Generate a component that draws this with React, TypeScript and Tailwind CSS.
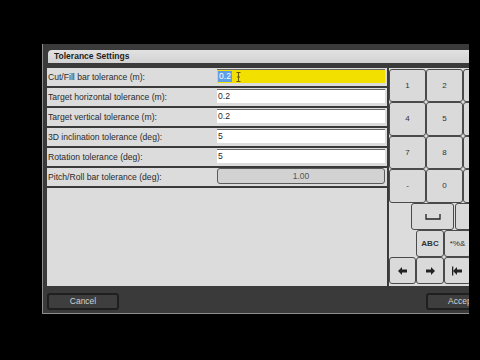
import type { ReactNode } from 'react'

const ROWS: { label: string; value: string; kind: 'active' | 'text' | 'button' }[] = [
  { label: 'Cut/Fill bar tolerance (m):', value: '0.2', kind: 'active' },
  { label: 'Target horizontal tolerance (m):', value: '0.2', kind: 'text' },
  { label: 'Target vertical tolerance (m):', value: '0.2', kind: 'text' },
  { label: '3D inclination tolerance (deg):', value: '5', kind: 'text' },
  { label: 'Rotation tolerance (deg):', value: '5', kind: 'text' },
  { label: 'Pitch/Roll bar tolerance (deg):', value: '1.00', kind: 'button' },
]

// third column is clipped by the window edge, so no labels there
const DIGITS = [
  ['1', '2', ''],
  ['4', '5', ''],
  ['7', '8', ''],
  ['-', '0', ''],
]
const ROW_H = ['h-[33px]', 'h-[34px]', 'h-[33px]', 'h-[34px]']

function Key({ className = '', children }: { className?: string; children?: ReactNode }) {
  return (
    <div
      className={`flex shrink-0 items-center justify-center rounded-[3px] border-[1.5px] border-[#4a4a4a] bg-[#dadada] text-[8px] text-[#333] ${className}`}
    >
      {children}
    </div>
  )
}

function IBeam() {
  return (
    <svg width="5" height="10" viewBox="0 0 5 10" className="ml-[4px]">
      <path d="M0.5 0.5h4M2.5 0.5v9M0.5 9.5h4M1 5h3" stroke="#6b5a00" strokeWidth="1" fill="none" />
    </svg>
  )
}

function Arrow({ dir, bar }: { dir: 'left' | 'right'; bar?: boolean }) {
  return (
    <svg width="12" height="10" viewBox="0 0 12 10">
      {dir === 'left' ? (
        <path d="M1 5l4-4v2.6h5v2.8H5V9z" fill="#222" />
      ) : (
        <path d="M11 5L7 1v2.6H2v2.8h5V9z" fill="#222" />
      )}
      {bar && <rect x="0" y="0.5" width="1.3" height="9" fill="#222" />}
    </svg>
  )
}

export default function App() {
  return (
    <div
      className="h-[360px] w-[480px] overflow-hidden bg-black pl-[42px] pt-[44px]"
      style={{ fontFamily: '"Liberation Sans", Arial, sans-serif' }}
    >
      <div className="flex h-[270px] w-[427px] flex-col overflow-hidden border-b border-l border-[#8e8e8e] bg-[#3a3a3a]">
        <div className="ml-[5px] mt-[6px] h-[13px] shrink-0 rounded-tl-[4px] bg-gradient-to-b from-[#e2e2e2] to-[#d2d2d2] pl-[6px] text-[8.5px] font-bold leading-[13px] text-[#1e1e1e]">
          Tolerance Settings
        </div>

        <div className="mt-[5px] flex h-[218px] shrink-0">
          <div className="ml-[4px] flex w-[340px] shrink-0 flex-col bg-[#dcdcdc]">
            {ROWS.map((r) => (
              <div key={r.label} className="flex h-[20px] shrink-0 border-b-2 border-[#3a3a3a]">
                <div className="flex w-[170px] shrink-0 items-center pl-[1px] text-[8.6px] text-[#2a2a2a]">{r.label}</div>
                {r.kind === 'button' ? (
                  <div className="flex h-[16px] w-[168px] shrink-0 items-center justify-center rounded-[3px] border border-[#5a5a5a] bg-[#d2d2d2] text-[8.5px] text-[#555]">
                    {r.value}
                  </div>
                ) : (
                  <div
                    className={`mt-[1px] flex h-[14px] w-[168px] shrink-0 items-center border-t border-[#6a6a6a] pl-[1px] text-[8.6px] ${
                      r.kind === 'active' ? 'bg-[#f2e000]' : 'bg-white text-[#2a2a2a]'
                    }`}
                  >
                    {r.kind === 'active' ? (
                      <>
                        <span className="bg-[#5f9ee6] px-[1px] leading-[11px] text-white">{r.value}</span>
                        <IBeam />
                      </>
                    ) : (
                      r.value
                    )}
                  </div>
                )}
              </div>
            ))}
          </div>

          <div className="ml-[2px] flex w-[120px] shrink-0 flex-col bg-[#dcdcdc] pt-[1px]">
            {DIGITS.map((row, i) => (
              <div key={i} className={`flex ${ROW_H[i]}`}>
                {row.map((d, j) => (
                  <Key key={j} className="h-full w-[37px]">
                    {d}
                  </Key>
                ))}
              </div>
            ))}
            <div className="flex h-[27px] pl-[22px]">
              <Key className="h-full w-[43px]">
                <svg width="16" height="6" viewBox="0 0 16 6">
                  <path d="M1 0v5h14V0" stroke="#222" strokeWidth="1.3" fill="none" />
                </svg>
              </Key>
              <Key className="ml-[1px] h-full w-[40px]" />
            </div>
            <div className="flex h-[27px] pl-[27px]">
              <Key className="h-full w-[28px] text-[6.5px] font-bold">ABC</Key>
              <Key className="h-full w-[27px] text-[6px]">*%&amp;</Key>
            </div>
            <div className="flex h-[27px]">
              <Key className="h-full w-[27px]">
                <Arrow dir="left" />
              </Key>
              <Key className="h-full w-[28px]">
                <Arrow dir="right" />
              </Key>
              <Key className="h-full w-[27px]">
                <Arrow dir="left" bar />
              </Key>
            </div>
          </div>
        </div>

        <div className="flex flex-1 items-start pt-[7px]">
          <div className="ml-[4px] flex h-[17px] w-[72px] shrink-0 items-center justify-center rounded-[3px] border-2 border-[#1f1f1f] bg-[#3e3e3e] text-[8.5px] text-[#d2d2d2]">
            Cancel
          </div>
          <div className="ml-[307px] flex h-[17px] w-[70px] shrink-0 items-center justify-center rounded-[3px] border-2 border-[#1f1f1f] bg-[#3e3e3e] text-[8.5px] text-[#d2d2d2]">
            Accept
          </div>
        </div>
      </div>
    </div>
  )
}
